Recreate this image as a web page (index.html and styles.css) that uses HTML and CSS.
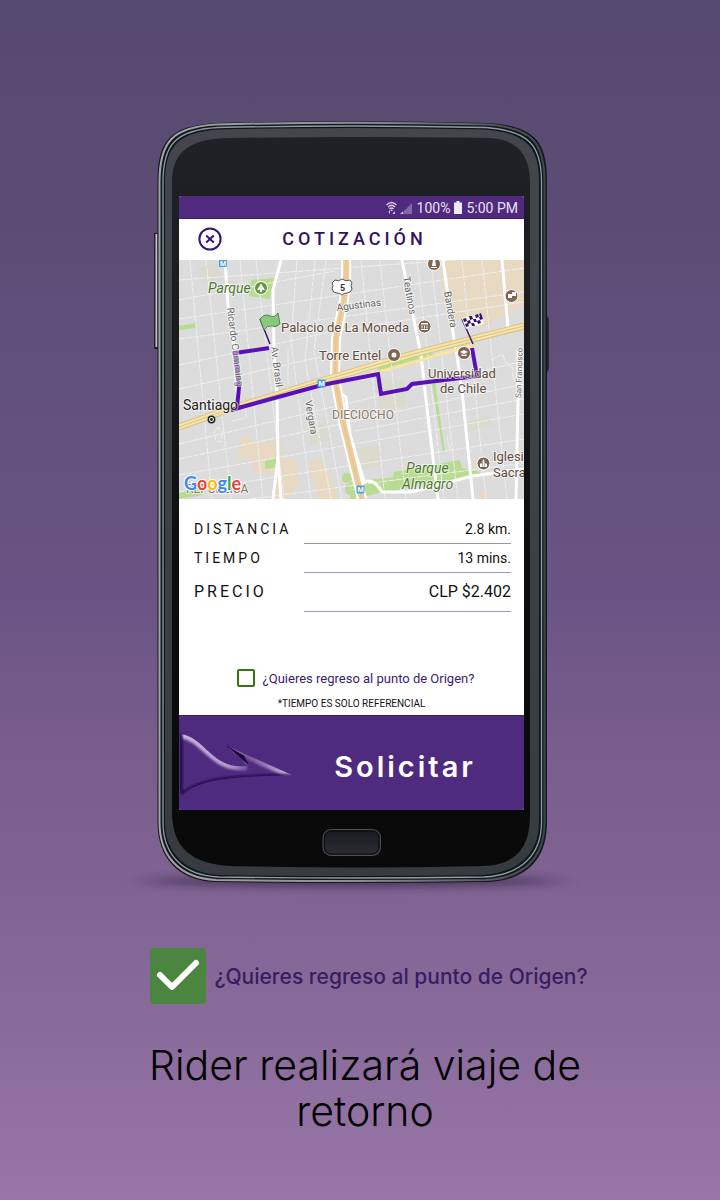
FILE: index.html
```html
<!DOCTYPE html>
<html lang="es">
<head>
<meta charset="utf-8">
<meta name="viewport" content="width=device-width, initial-scale=1">
<title>Cotización</title>
<link rel="stylesheet" href="styles.css">
</head>
<body>
<main class="promo">
  <div class="phone">
    <svg class="phone-body" viewBox="152 115 400 775" preserveAspectRatio="none" aria-hidden="true">
      <defs>
        <linearGradient id="glass" x1="0" y1="0" x2="0" y2="1">
          <stop offset="0" stop-color="#1f2126"/><stop offset=".25" stop-color="#1b1c20"/><stop offset=".6" stop-color="#0d0d0f"/><stop offset="1" stop-color="#090909"/>
        </linearGradient>
        <linearGradient id="bezel" x1="0" y1="0" x2="0" y2="1">
          <stop offset="0" stop-color="#44464b"/><stop offset="1" stop-color="#363b40"/>
        </linearGradient>
        <linearGradient id="rim" x1="0" y1="0" x2="1" y2="0">
          <stop offset="0" stop-color="#a3a4a4"/><stop offset=".5" stop-color="#8a9094"/><stop offset="1" stop-color="#3e464d"/>
        </linearGradient>
        <linearGradient id="home" x1="0" y1="0" x2="0" y2="1">
          <stop offset="0" stop-color="#191a1f"/><stop offset="1" stop-color="#2d2e33"/>
        </linearGradient>
        <filter id="soft" x="-20%" y="-200%" width="140%" height="500%"><feGaussianBlur stdDeviation="14 4"/></filter>
      </defs>
      <ellipse cx="352" cy="881" rx="206" ry="6" fill="#2b1c3a" opacity=".6" filter="url(#soft)"/>
      <path d="M154 233h4v116h-4z" fill="#23232b"/><path d="M155.500 234h2v113h-2z" fill="#c4c4c8"/>
      <path d="M546 315q3 2 3 6v46q0 4-3 6z" fill="#26262e"/>
      <path d="M157.500 182C157.500 140 170 126 216 123Q352 119.500 488 123C534 126 547 140 547 182V822C547 862 524 880 488 882Q352 884 214 882C178 880 157.500 858 157.500 822Z" fill="#15191d"/>
      <path d="M159.500 182C159.500 142 172 127 216 124.500Q352 121 488 124.500C532 128 544.500 142 544.500 182V822C544.500 860 522 878 486 880Q352 882 216 880C179 878 159.500 856 159.500 822Z" fill="none" stroke="url(#rim)" stroke-width="2"/>
      <path d="M163 182C163 145 175 130 218 127.500Q352 124.500 486 127.500C529 131 541.500 145 541.500 182V822C541.500 856 520 875 484 877Q352 879 218 877C182 875 163 854 163 822Z" fill="#10151a" stroke="#8e9ca7" stroke-width="1.300"/>
      <path d="M165 182C165 147 177 132 220 129.500Q352 126.500 484 129.500C527 133 539 147 539 182V822C539 854 518 873 482 875Q352 877 220 875C184 873 165 852 165 822Z" fill="url(#bezel)"/>
      <path d="M172 182C172 152 190 138 230 138Q352 136 490 138C516 139 530 154 530 182V815C530 848 516 865 482 866Q352 869 230 866C192 864 172 848 172 812Z" fill="url(#glass)"/>
      <rect x="323" y="829.500" width="57.500" height="26" rx="8" fill="url(#home)" stroke="#4e504f" stroke-width="1"/>
      <rect x="324.500" y="831" width="54.500" height="23" rx="7" fill="none" stroke="#0a0a0c"/>
    </svg>

    <section class="screen">
      <div class="status">
        <svg class="status-net" viewBox="0 0 28 14" aria-hidden="true">
          <g fill="none" stroke="#ddd0ee" stroke-width="1.200"><path d="M1.500 4Q6.500-1 11.500 4M3 6Q6.500 2.500 10 6M4.500 8Q6.500 6 8.500 8"/></g>
          <path d="M6.500 8.200l1.300 1.800h-2.600zM3.500 11l1.500-2v4zM9.500 10l-2 3h2.500z" fill="#ddd0ee"/>
          <path d="M27 2v11H16z" fill="#8168a6"/><path d="M18 10.500V13h-3z" fill="#d5c8e6"/>
        </svg>
        <span>100%</span>
        <svg class="status-battery" viewBox="0 0 8 13" aria-hidden="true"><path d="M2.500 0h3v1.500H8V13H0V1.500h2.500z" fill="#efe9f7"/></svg>
        <span>5:00 PM</span>
      </div>

      <header class="bar">
        <button class="close" type="button" aria-label="Cerrar">
          <svg viewBox="0 0 24 24" aria-hidden="true"><circle cx="12" cy="12" r="10.600"/><path d="M8.200 8.500l7.600 7M15.800 8.500l-7.600 7"/></svg>
        </button>
        <h1 class="bar-title">COTIZACIÓN</h1>
      </header>

      <svg class="map" viewBox="179 260 345 239" preserveAspectRatio="xMidYMid slice" role="img" aria-label="Mapa del recorrido">
        <rect x="179" y="260" width="345" height="239" fill="#dcdcdc"/>
        <g fill="#e8d9c3">
          <path d="M440 260h84v45l-32 16-10 8-34-12-6-30z"/>
          <path d="M241 438l10-2 2 8 30-4-2 19h14l4 24-10 16h-13l-2-25-20-2-4-14h-12z"/>
          <path d="M306 462l15-3 14 28 2 12h-20l-4-20z"/><circle cx="484" cy="496" r="4"/>
        </g>
        <g fill="#dadbce"><path d="M198 268l20-5 4 16-20 4zM374 378l30 4 2 24-26 5zM350 450l30-5v20l-26 6zM308 426l20-4 3 18-20 4zM463 423l28-8 2 10-28 8z"/></g>
        <g fill="#b8dc91">
          <path d="M251 280l23-2-4 21-21-3zM179 326l17-3v5l-17 2zM376 366l50-15 12 6-59 15zM265 461l10-3 4 9-14 2zM394 472l66-12 2 8 19 4-3 4-50 7-38 9zM350 482l45-5v12l-45 11zM432 383l3-1 10 70h-2zM179 493l20-6 4 8-24 4z"/>
          <circle cx="347" cy="478" r="5"/><circle cx="351" cy="489" r="6"/>
        </g>
        <g fill="none" stroke="#efefef" stroke-width="1" stroke-dasharray="6 1">
          <path d="M190 260l22 240M206 260l25 240M240 260l23 240M256 260l28 240M297 260l-6 80 20 160M315 260l-10 100 26 140M326 260l-12 90 28 150M361 260l24 240M380 260l26 240M417 260l27 240M431 260l27 240M462 260l24 240M482 260l25 240"/>
          <path d="M179 280L524 255M179 300L335 271M179 319L524 268M179 339L524 292M179 365L340 330L524 302M179 389L320 357M179 444L524 361M179 459L524 384M179 475L524 414M179 492L524 439M250 499L524 463M355 431L524 399"/>
          <path d="M218 427l4 5-1 10-5-1-2-8zM231 408l14-2 1 12-14 3M491 360l12-6 2 8 8 6v12M288 350v38M447 436l3 14"/>
        </g>
        <g fill="none" stroke="#fff" stroke-width="3">
          <path d="M225 260l3 45 7 50 3 53M281 260l-8 30 1 62 3 45 1 60-5 42M278 460l3 39M402 260l19 95 5 45 12 99M443 260l11 80M455 340l8 60 10 99M502 260l6 68M518 350v49l-2 100"/>
          <path d="M336 390l10 7 4 38 14 46M360 484q12-9 22 8h30l60-16 52-7"/>
        </g>
        <path d="M346 260q1 20-2 40l-8 38-1 40 8 44 19 77" fill="none" stroke="#fff" stroke-width="10"/>
        <path d="M346 260q1 20-2 40l-8 38-1 40 8 44 19 77" fill="none" stroke="#f0cd98" stroke-width="6"/>
        <path d="M346 260q1 20-2 40l-8 38-1 40 8 44 19 77" fill="none" stroke="#d8c3a4" stroke-width="1"/>
        <path d="M179 427l54-19 88-27 92-27 111-28" fill="none" stroke="#d3c48a" stroke-width="7"/>
        <path d="M179 427l54-19 88-27 92-27 111-28" fill="none" stroke="#f9e4a0" stroke-width="5"/>
        <path d="M179 427l54-19 88-27 92-27 111-28" fill="none" stroke="#cfc39b" stroke-width="1"/>
        <path d="M350 380l71-20 52-15" fill="none" stroke="#f9e4a0" stroke-width="3"/>
        <path d="M269 348l-34 5 4 34-2 21M231 410l91-25 56-11 3 20 26-5 5-5 65-8-5-28" fill="none" stroke="#5a10b8" stroke-width="4"/>

        <g class="map-street">
          <text transform="translate(227 308) rotate(83)">Ricardo Cumming</text>
          <text transform="translate(271 347) rotate(83)">Av. Brasil</text>
          <text transform="translate(305 401) rotate(80)">Vergara</text>
          <text transform="translate(403 277) rotate(80)">Teatinos</text>
          <text transform="translate(444 292) rotate(80)">Bandera</text>
          <text transform="translate(337 311) rotate(-7)">Agustinas</text>
          <text class="map-tiny" transform="translate(521 398) rotate(-88)">San Francisco</text>
        </g>
        <g class="map-place">
          <text x="281" y="332">Palacio de La Moneda</text>
          <text x="319" y="360">Torre Entel</text>
          <text x="428" y="378">Universidad</text>
          <text x="440" y="393">de Chile</text>
          <text x="493" y="461">Iglesi</text>
          <text x="493" y="477">Sacra</text>
        </g>
        <g class="map-park">
          <text x="208" y="293">Parque</text>
          <text x="406" y="473">Parque</text>
          <text x="402" y="489">Almagro</text>
        </g>
        <text class="map-zone" x="332" y="419">DIECIOCHO</text>
        <text class="map-zone" x="186" y="493">REPÚBLICA</text>
        <text class="map-city" x="183" y="410">Santiago</text>
        <circle cx="211.500" cy="419.500" r="3.200" fill="#fff" stroke="#222" stroke-width="1.500"/><circle cx="211.500" cy="419.500" r="1.400" fill="#222"/>

        <circle cx="261" cy="288" r="7" fill="#fff"/><circle cx="261" cy="288" r="6" fill="#63993e"/><path d="M261 283.500l4 6.500h-3v2h-2v-2h-3z" fill="#fff"/>
        <g fill="#806552" stroke="#fff">
          <circle cx="434" cy="264" r="6.500"/><circle cx="511.500" cy="296" r="6.500"/><circle cx="424.500" cy="326.500" r="6.500"/><circle cx="394" cy="355" r="6.500"/><circle cx="464" cy="353" r="6.500"/><circle cx="483.500" cy="463.500" r="6.500"/>
        </g>
        <g fill="#fff">
          <circle cx="394" cy="355" r="2.500"/><path d="M433 259h2l1 7h-4zM431 267h6v1h-6zM508 294h4v4h-4zM512 292h4v4h-4zM421 323h7v1.500h-7zM421.500 325.500h1v3h-1zM424 325.500h1v3h-1zM426.500 325.500h1v3h-1zM421 329h7v1h-7zM460 352l4-2 4 2-4 2zM461.500 354l2.500 1 2.500-1v2h-5zM480 467v-3l1-1 1 1v3zM482.500 467v-6l1-2 1 2v6zM485 467v-3l1-1 1 1v3z"/>
        </g>
        <g>
          <rect x="219" y="259" width="8" height="8" rx="1" fill="#43a0dc"/><rect x="317.500" y="379.500" width="8" height="8" rx="1" fill="#43a0dc"/><rect x="356.500" y="485.500" width="8" height="8" rx="1" fill="#43a0dc"/>
          <g class="map-metro"><text x="223" y="266">M</text><text x="321.500" y="386">M</text><text x="360.500" y="492">M</text></g>
        </g>
        <path d="M335 280q4 2 7-1 4 3 8 1l2 3q-2 2 0 6-1 4-5 4-3 0-5 2-2-2-5-2-4 0-5-4 2-4 0-6z" fill="#fff" stroke="#555" stroke-width="1"/>
        <text class="map-route" x="342.500" y="291">5</text>

        <path d="M260 319l10 25" stroke="#3d1a78" stroke-width="1.500"/>
        <path d="M260 319q5-6 10-3 5 2 8-3l2 11q-4 4-8 2-5-1-8 4z" fill="#89c97c" stroke="#5b7d5a" stroke-width="1"/>
        <path d="M462 319l11 25" stroke="#3d1a78" stroke-width="1.500"/>
        <path d="M462 319q5-3 10-3 5 0 9-3l3 10q-4 3-9 3-5 0-9 3z" fill="#fff"/>
        <path d="M463 319l3-1 1 3-3 1zM469 316l3 0 1 3-3 1zM475 315l3-1 1 3-3 1zM467 321l3-1 1 3-3 1zM473 319l3 0 1 3-3 0zM479 317l3-1 1 3-3 1zM465 324l3-1 1 3-3 1zM471 323l3 0 1 3-3 0zM477 321l3-1 1 3-3 1zM481 313l1 3-2 1-1-3z" fill="#35156e"/>
        <text class="map-logo" x="184" y="490"><tspan fill="#4285f4">G</tspan><tspan fill="#ea4335">o</tspan><tspan fill="#fbbc05">o</tspan><tspan fill="#4285f4">g</tspan><tspan fill="#34a853">l</tspan><tspan fill="#ea4335">e</tspan></text>
      </svg>

      <dl class="quote">
        <div class="quote-row"><dt>DISTANCIA</dt><dd>2.8 km.</dd></div>
        <div class="quote-row"><dt>TIEMPO</dt><dd>13 mins.</dd></div>
        <div class="quote-row quote-price"><dt>PRECIO</dt><dd>CLP $2.402</dd></div>
      </dl>

      <label class="return"><input class="return-box" type="checkbox"><span>¿Quieres regreso al punto de Origen?</span></label>
      <p class="note">*TIEMPO ES SOLO REFERENCIAL</p>

      <button class="request" type="button">
        <svg class="request-logo" viewBox="179 730 115 65" aria-hidden="true">
          <defs>
            <filter id="emboss" x="-10%" y="-20%" width="120%" height="140%"><feGaussianBlur stdDeviation="1.100"/></filter>
            <clipPath id="wing"><path d="M181 733C206 737 212 769 247 765L227 745L292 774C256 776 204 774 183 793Z"/></clipPath>
            <linearGradient id="shine" gradientUnits="userSpaceOnUse" x1="181" y1="0" x2="292" y2="0"><stop offset="0" stop-color="#c8b4e0"/><stop offset=".45" stop-color="#b099cf"/><stop offset=".6" stop-color="#765399"/><stop offset="1" stop-color="#cdbbe4"/></linearGradient>
          </defs>
          <path d="M181 733C206 737 212 769 247 765L227 745L292 774C256 776 204 774 183 793Z" fill="#4f2b80"/>
          <g clip-path="url(#wing)">
            <path d="M181 733C206 737 212 769 247 765M227 745L292 774" fill="none" stroke="url(#shine)" stroke-width="8" filter="url(#emboss)"/>
            <path d="M292 775C256 776 204 774 183 793" fill="none" stroke="#220a48" stroke-width="4" filter="url(#emboss)"/>
          </g>
          <path d="M181 733v56l2 4" fill="none" stroke="#1e0840" stroke-width="3" filter="url(#emboss)"/>
          <path d="M227 745l21 18-4-8z" fill="#16042f" stroke="#2a0f52" stroke-width="1"/>
        </svg>
        <span class="request-text">Solicitar</span>
      </button>
    </section>
  </div>

  <label class="feature">
    <input class="feature-input" type="checkbox" checked>
    <svg class="feature-tick" viewBox="0 0 56 56" aria-hidden="true"><rect width="56" height="56" rx="4" fill="#4b853f"/><path d="M10 27L22 39L46 15" fill="none" stroke="#fff" stroke-width="6" stroke-linecap="round" stroke-linejoin="round"/></svg>
    <span>¿Quieres regreso al punto de Origen?</span>
  </label>
  <p class="caption">Rider realizará viaje de retorno</p>
</main>
</body>
</html>
```
FILE: styles.css
```css
* { box-sizing: border-box; }

body {
  margin: 0;
  min-height: 100vh;
  font-family: Roboto, "Liberation Sans", sans-serif;
  background: linear-gradient(#56496f 0%, #5b4c74 16%, #6a5485 50%, #775c8c 61%, #826695 78%, #9776a8 100%);
}

.promo {
  display: flex;
  flex-direction: column;
  align-items: center;
  padding: 115px 16px 64px;
}

/* Phone: the drawn body and the screen share one grid cell */
.phone {
  display: grid;
  width: 100%;
  max-width: 400px;
  margin-right: 16px;
}
.phone-body, .screen { grid-area: 1 / 1; }
.phone-body { width: 100%; height: 100%; overflow: visible; }
.screen {
  display: flex;
  flex-direction: column;
  margin: 81px 28px 80px 27px;
  border-radius: 2px;
  overflow: hidden;
  background: #fff;
  z-index: 1;
}

.status {
  display: flex;
  align-items: center;
  justify-content: flex-end;
  gap: 4px;
  height: 23px;
  padding: 1px 6px 0;
  color: #e9e0f4;
  background: #4f2a7f;
  border-bottom: 1px solid #411a72;
  font-size: 14px;
}
.status-net { width: 28px; height: 14px; }
.status-battery { width: 8px; height: 13px; }

.bar {
  display: grid;
  grid-template-columns: 24px 1fr;
  align-items: center;
  height: 41px;
  padding: 0 37px 2px 19px;
}
.close { padding: 0; border: 0; background: none; line-height: 0; }
.close svg { width: 24px; height: 24px; fill: none; stroke: #36137a; stroke-width: 2; }
.bar-title {
  margin: 0;
  text-align: center;
  font-size: 18px;
  font-weight: 500;
  letter-spacing: 4px;
  color: #35125f;
}

.map { display: block; width: 100%; }
.map text { paint-order: stroke; stroke: #fff; stroke-width: 2px; stroke-opacity: .6; }
.map .map-street text { font-size: 10px; fill: #666; }
.map .map-street .map-tiny { font-size: 8px; }
.map-place { font-size: 13px; fill: #624d40; }
.map-park { font-size: 14px; font-style: italic; fill: #50772f; }
.map-zone { font-size: 12px; fill: #8a7a66; }
.map-city { font-size: 14px; fill: #222; }
.map .map-metro text { font-size: 7px; font-weight: 700; fill: #fff; stroke: none; text-anchor: middle; }
.map .map-route { font-size: 9px; font-weight: 700; fill: #333; text-anchor: middle; }
.map .map-logo { font-family: Lato, sans-serif; font-size: 18px; font-weight: 700; stroke-opacity: 1; }

.quote { margin: 0; padding: 16px 13px 0 15px; font-size: 14px; color: #111; }
.quote-row { display: grid; grid-template-columns: 110px 1fr; line-height: 28px; }
.quote-row dt { letter-spacing: 3px; }
.quote-row dd { margin: 0; text-align: right; border-bottom: 1px solid #9b95ad; }
.quote-price { font-size: 16px; line-height: 38px; }

.return {
  display: flex;
  align-items: center;
  justify-content: center;
  gap: 8px;
  margin-top: 56px;
  padding-left: 8px;
  height: 20px;
  font-size: 13px;
  color: #3b1c70;
}
.return-box {
  appearance: none;
  width: 18px;
  height: 18px;
  margin: 0;
  border: 2px solid #35750f;
  border-radius: 2px;
  background: #fff;
}
.note { margin: 8px 0 3px; text-align: center; font-size: 10px; line-height: 16px; color: #111; }

.request {
  display: flex;
  align-items: center;
  height: 95px;
  padding: 0 8px 0 0;
  border: 0;
  border-top: 1px solid #3f1a6e;
  background: #4f2b80;
  color: #fff;
}
.request-logo { width: 115px; height: 65px; }
.request-text {
  flex: 1;
  padding-top: 6px;
  font-family: Inter, sans-serif;
  font-size: 29px;
  font-weight: 600;
  letter-spacing: 3px;
}

.feature {
  display: flex;
  align-items: center;
  gap: 8px;
  margin: 58px 0 0 18px;
  font-family: Inter, sans-serif;
  font-size: 21px;
  font-weight: 500;
  color: #371d61;
}
.feature-input { appearance: none; position: absolute; margin: 0; width: 56px; height: 56px; }
.feature-tick { flex: none; width: 56px; height: 56px; }

.caption {
  max-width: 460px;
  margin: 38px 0 0 10px;
  text-align: center;
  font-family: Inter, sans-serif;
  font-size: 41px;
  font-weight: 300;
  line-height: 46px;
  color: #000;
}
```
